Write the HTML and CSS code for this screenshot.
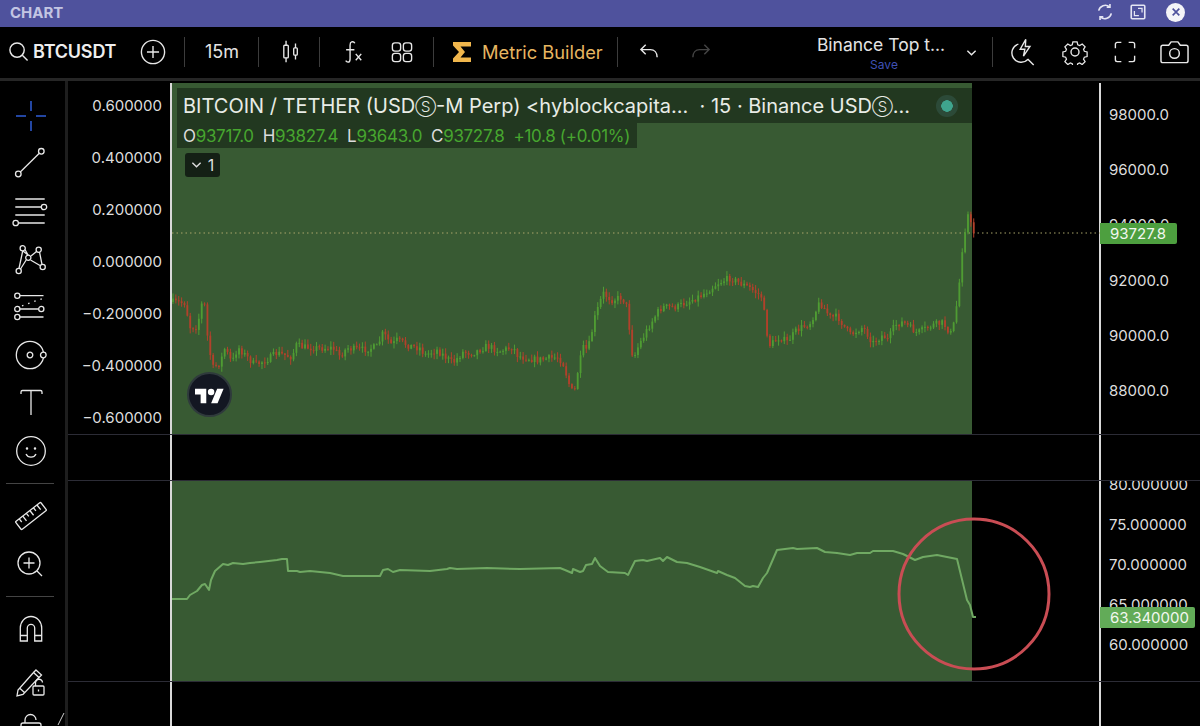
FILE: index.html
```html
<!DOCTYPE html>
<html lang="en">
<head>
<meta charset="utf-8">
<title>Chart</title>
<link rel="stylesheet" href="styles.css">
</head>
<body>
<header class="titlebar">
  <span class="title">CHART</span>
  <div class="win-actions">
    <svg class="win-ic" viewBox="0 0 20 20"><path d="M3 8.500A7.500 7.500 0 0 1 15 4.200M17 11.500A7.500 7.500 0 0 1 5 15.800"/><path d="M15.500 1v3.600h-3.600M4.500 19v-3.600h3.600"/></svg>
    <svg class="win-ic" viewBox="0 0 20 20"><rect x="2.500" y="2.500" width="15" height="15" rx="1"/><path d="M6 9v5h5M10 6h4.500v4.500" class="thin"/></svg>
    <span class="close"><svg viewBox="0 0 12 12"><path d="M2 2l8 8M10 2l-8 8"/></svg></span>
  </div>
</header>

<nav class="toolbar">
  <svg class="ic s22" viewBox="0 0 22 22"><circle cx="9.500" cy="9.500" r="7.500"/><path d="M15 15l5.500 5.500"/></svg>
  <span class="symbol">BTCUSDT</span>
  <svg class="ic s28 add" viewBox="0 0 28 28"><circle cx="14" cy="14" r="12.500"/><path d="M14 7.500v13M7.500 14h13"/></svg>
  <i class="sep s1"></i>
  <span class="interval">15m</span>
  <i class="sep s2"></i>
  <svg class="ic s24 candle" viewBox="0 0 20 26"><rect x="2" y="6" width="5" height="14" rx="1"/><path d="M4.500 1v5M4.500 20v5"/><rect x="13" y="9" width="4" height="8" rx="1"/><path d="M15 4v5M15 17v5"/></svg>
  <i class="sep s3"></i>
  <span class="fx"><svg class="ic s24" viewBox="0 0 24 26"><path d="M14 3.500a3 3 0 0 0-3.500-1.500c-1.500.5-1.700 2-1.700 3.500v15c0 2-.8 3.500-2.300 3.500-1 0-1.800-.5-2.500-1.500M4.500 10.500h9"/><path d="M15 15l6 7M21 15l-6 7" class="thin"/></svg></span>
  <svg class="ic s24 grid-ic" viewBox="0 0 24 24"><rect x="1.500" y="2" width="9" height="9" rx="2.800"/><rect x="13.500" y="2" width="9" height="9" rx="2.800"/><rect x="1.500" y="13.500" width="9" height="9" rx="2.800"/><rect x="13.500" y="13.500" width="9" height="9" rx="2.800"/></svg>
  <i class="sep s4"></i>
  <svg class="sigma" viewBox="0 0 20 22"><path d="M1 1h18v4.500H8.500L13 11l-4.500 5.500H19V21H1v-3.500L7 11 1 4.500z"/></svg>
  <span class="metric">Metric Builder</span>
  <i class="sep s5"></i>
  <svg class="ic s22 undo" viewBox="0 0 22 20"><path d="M7 3L2 8l5 5M2 8h10c4 0 7 3 7 8"/></svg>
  <svg class="ic s22 redo" viewBox="0 0 22 20"><path d="M15 3l5 5-5 5M20 8H10c-4 0-7 3-7 8"/></svg>
  <div class="layout">
    <span class="layout-name">Binance Top t...</span>
    <span class="save">Save</span>
  </div>
  <svg class="ic chev" viewBox="0 0 12 8"><path d="M1.500 1.500L6 6l4.500-4.500"/></svg>
  <i class="sep s6"></i>
  <svg class="ic s28 bolt" viewBox="0 0 28 30"><path d="M9 6.500a10 10 0 1 0 10.500 16.200M19 22.500l6.500 6.500"/><path d="M17 1.500L11 12h5l-1.500 7.500 7-10.500h-5z"/></svg>
  <svg class="ic s28 gear" viewBox="0 0 28 28"><circle cx="14" cy="14" r="4.300"/><path d="M11.500 1.800h5l.8 3.500 2.300 1 3-1.900 3.500 3.500-1.900 3 1 2.300 3.300.8v5.400l-3.300.8-1 2.300 1.900 3-3.500 3.500-3-1.900-2.300 1-.8 3.200h-5l-.8-3.200-2.300-1-3 1.900-3.500-3.500 1.900-3-1-2.300-3.300-.8v-5.400l3.300-.8 1-2.300-1.900-3 3.500-3.500 3 1.900 2.300-1z" transform="translate(1.400 1.400) scale(.9)"/></svg>
  <svg class="ic s24 full" viewBox="0 0 24 24"><path d="M1.500 8V3.500a2 2 0 0 1 2-2H8M16 1.500h4.500a2 2 0 0 1 2 2V8M22.500 16v4.500a2 2 0 0 1-2 2H16M8 22.500H3.500a2 2 0 0 1-2-2V16"/></svg>
  <svg class="ic cam" viewBox="0 0 30 24"><path d="M3 5h6l2.500-3.500h7L21 5h6a2 2 0 0 1 2 2v14a2 2 0 0 1-2 2H3a2 2 0 0 1-2-2V7a2 2 0 0 1 2-2z"/><circle cx="15" cy="13.500" r="5"/></svg>
</nav>

<main class="workspace">
  <aside class="rail">
    <div class="tool"><svg class="blue" viewBox="-18 -19 36 36"><path d="M0-15V-5M0 5V15M-15 0H-5M5 0H15"/></svg></div>
    <div class="tool"><svg viewBox="-18 -18 36 36"><circle cx="-12.700" cy="11" r="2.800"/><circle cx="10.300" cy="-11.700" r="2.800"/><path d="M-10.700 9L8.300-9.700"/></svg></div>
    <div class="tool"><svg viewBox="-18 -18 36 36"><path d="M-15.700-12H13.700M-15.700-4H10.300M-15.700 4H13.700M-12.500 12H13.700"/><circle cx="13" cy="-4" r="2.700"/><circle cx="-15.300" cy="12" r="2.700"/></svg></div>
    <div class="tool"><svg viewBox="-18 -18 36 36"><path d="M-8-8L-3-4M-8.300-8L-12 9.500M-6-9.500L-2.700-3.500M5.500-7.500L0-3M8.500-7L11 5.500M-.5 1L9 6.500M-4.500 0.500L-10.500 10"/><circle cx="-8.300" cy="-10.700" r="2.600"/><circle cx="7.700" cy="-9.300" r="2.600"/><circle cx="-2.700" cy="-1.300" r="2.600"/><circle cx="11.700" cy="8" r="2.600"/><circle cx="-12.300" cy="12" r="2.600"/></svg></div>
    <div class="tool"><svg viewBox="-18 -18 36 36"><circle cx="-13.700" cy="-11.300" r="2.600"/><circle cx="-13.700" cy="2" r="2.600"/><circle cx="10.300" cy="2" r="2.600"/><circle cx="-13.700" cy="10" r="2.600"/><path d="M-11-11.300H12.500M-11 2H7.700M-11 10H12.500"/><path d="M-9-1.200L13-9" class="dots"/></svg></div>
    <div class="tool"><svg viewBox="-18 -18 36 36"><circle cx="-1" r="13.700"/><circle cx="-1" r="2.800"/><circle cx="12.300" r="2.800" class="fillbg"/></svg></div>
    <div class="tool"><svg viewBox="-18 -18 36 36"><path d="M-10-9v-2q0-1.500 1.500-1.500H9.500Q11-12.500 11-11v2M0-12.500V12"/></svg></div>
    <div class="tool"><svg viewBox="-18 -18 36 36"><circle r="14.300"/><circle cx="-4" cy="-2.500" r=".6"/><circle cx="4" cy="-2.500" r=".6"/><path d="M-5 3a5.500 5.500 0 0 0 10 0"/></svg></div>
    <hr class="rule">
    <div class="tool"><svg viewBox="-18 -18 36 36"><g transform="rotate(-38)"><rect x="-16" y="-5" width="32" height="10" rx="1"/><path d="M-11-5v4M-6.500-5v6M-2-5v4M2.500-5v6M7-5v4M11.500-5v6"/></g></svg></div>
    <div class="tool"><svg viewBox="-18 -18 36 36"><circle cx="-2" cy="-1" r="11"/><path d="M6 7L11 12M-2-6.500V4.500M-7.500-1H3.500"/></svg></div>
    <hr class="rule">
    <div class="tool"><svg viewBox="-18 -18 36 36"><path d="M-10.700 12V-1A10.700 11.500 0 0 1 10.700-1V12H3.700V-1A3.700 3.700 0 0 0-3.700-1V12ZM-10.700 6.500H-3.700M3.700 6.500H10.700"/></svg></div>
    <div class="tool pencil"><svg viewBox="-18 -18 36 36"><path d="M-13 8L-14 14 -8 12.500 8-4.500 2.500-9.500ZM-11.500 6L-6 11M5-12L10.500-7 8-4.500 2.500-9.500Z"/><rect x="2" y="4" width="11" height="9" rx="1" class="fillbg"/><path d="M4.500 4V1a3.500 3.500 0 0 1 7-.5M7.500 7.500v2"/></svg></div>
    <div class="tool"><svg viewBox="-18 -18 36 36"><path d="M-6-7V-10a5.500 5.500 0 0 1 11 0"/><rect x="-10" y="-7" width="20" height="17" rx="2"/></svg></div>
    <svg class="corner" viewBox="0 0 8 14"><path d="M7 1L1 13"/></svg>
  </aside>

  <section class="panes">
    <div class="row top">
      <div class="axis left">
        <span>0.600000</span><span>0.400000</span><span>0.200000</span><span>0.000000</span><span>−0.200000</span><span>−0.400000</span><span>−0.600000</span>
      </div>
      <div class="plot"></div>
      <div class="margin"></div>
      <div class="axis right">
        <span>98000.0</span><span>96000.0</span><span>94000.0</span><span>92000.0</span><span>90000.0</span><span>88000.0</span>
      </div>
      <svg id="candles" class="overlay" viewBox="68 83 1132 351"></svg>
      <div class="legend">
        <div class="legend-title">
          <span>BITCOIN / TETHER (USD<span class="sc">Ⓢ</span>-M Perp) &lt;hyblockcapita...&nbsp; · 15 · Binance USD<span class="sc">Ⓢ</span>...</span>
          <i class="status"></i>
        </div>
        <div class="ohlc">
          <span>O<b>93717.0</b></span><span>H<b>93827.4</b></span><span>L<b>93643.0</b></span><span>C<b>93727.8</b></span><span><b>+10.8 (+0.01%)</b></span>
        </div>
        <div class="collapse"><svg viewBox="0 0 12 8"><path d="M1.500 1.500L6 6l4.500-4.500"/></svg>1</div>
      </div>
      <div class="tv-logo"><svg viewBox="0 0 36 28"><path d="M14 25H7V14H0V7h14v18zM28 25h-8l7.500-18h8L28 25z"/><circle cx="20" cy="11" r="4"/></svg></div>
      <span class="tag price">93727.8</span>
    </div>

    <div class="row gap">
      <div></div><div class="plot blank"></div><div></div><div class="axis right"></div>
    </div>

    <div class="row bottom">
      <div></div>
      <div class="plot"></div>
      <div class="margin"></div>
      <div class="axis right osc">
        <span>80.000000</span><span>75.000000</span><span>70.000000</span><span>65.000000</span><span>60.000000</span>
      </div>
      <svg class="overlay" viewBox="68 481 1132 200">
        <polyline class="osc-line" points="172,599 187,599 190,595 197,591 202,585 205,584 209,590 211,580 215,571 223,564 228,565 233,563 243,564 250,563 260,562 277,560 282,559 287,559 288,571 297,571 300,572 310,571 330,573 343,576 380,576 383,570 388,569 393,572 400,570 430,571 447,569 450,568 457,569 487,568 520,569 560,568 565,570 572,573 573,569 580,572 583,571 586,565 592,564 595,558 600,566 608,572 625,573 628,575 635,561 643,560 647,561 660,558 663,561 667,557 677,562 687,563 700,567 717,573 718,571 727,575 735,578 745,586 750,587 753,586 758,587 763,578 767,573 777,550 793,548 797,549 817,548 825,552 837,553 850,555 857,553 870,553 873,551 893,551 903,554 915,560 923,557 937,555 957,559 967,600 970,605 973,617 976,617"/>
        <circle class="mark" cx="974" cy="594" r="75"/>
      </svg>
      <span class="tag value">63.340000</span>
    </div>

    <div class="row foot">
      <div></div><div class="plot blank"></div><div></div><div class="axis right"></div>
    </div>
  </section>
</main>
<script src="chart.js"></script>
</body>
</html>
```

FILE: styles.css
```css
* { box-sizing: border-box; }
html, body { margin: 0; height: 100%; }
body {
  width: 1200px;
  height: 726px;
  overflow: hidden;
  background: #000;
  color: #e6e6e6;
  font-family: Inter, "Liberation Sans", sans-serif;
  display: flex;
  flex-direction: column;
}

.titlebar {
  height: 27px;
  flex: none;
  background: #4f529d;
  display: flex;
  align-items: center;
  justify-content: space-between;
  padding: 0 15px 3px 10px;
}
.title { font-size: 15px; font-weight: 700; color: #c3c5e3; }
.win-actions { display: flex; align-items: center; gap: 15px; }
.win-ic { width: 18px; height: 18px; fill: none; stroke: #e4e5f3; stroke-width: 1.800; }
.win-ic .thin { stroke-width: 1.400; }
.close {
  width: 19px; height: 19px; border-radius: 50%;
  background: #f4f4f8;
  display: flex; align-items: center; justify-content: center;
  margin-left: 4px;
}
.close svg { width: 10px; height: 10px; fill: none; stroke: #4f529d; stroke-width: 2; }

.toolbar {
  height: 54px;
  flex: none;
  display: flex;
  align-items: center;
  border-bottom: 3px solid #262626;
  padding: 0 9px 2px 8px;
  font-size: 18px;
}
.toolbar > * { flex: none; }
.ic { fill: none; stroke: #e8e8e8; stroke-width: 1.500; }
.s22 { width: 21px; height: 21px; }
.s24 { width: 22px; height: 24px; }
.s28 { width: 26px; height: 26px; }
.sep { width: 1px; height: 30px; background: #3c3c3c; }
.symbol { font-weight: 600; margin-left: 4px; color: #eee; letter-spacing: -.2px; width: 82px; }
.add { margin-left: 25px; }
.s1 { margin-left: 18px; }
.interval { margin-left: 20px; width: 35px; color: #e4e4e4; }
.s2 { margin-left: 18px; }
.candle { margin-left: 23px; width: 18px; height: 27px; }
.s3 { margin-left: 19px; }
.fx { margin-left: 22px; display: flex; }
.grid-ic { margin-left: 27px; }
.s4 { margin-left: 20px; }
.sigma { margin-left: 18px; width: 20px; height: 22px; fill: #f0b64c; }
.metric { margin-left: 10px; color: #e7b661; width: 123px; font-size: 18.300px; white-space: nowrap; }
.s5 { margin-left: 12px; }
.undo { margin-left: 21px; }
.redo { margin-left: 30px; stroke: #444; }
.layout {
  margin-left: 106px;
  width: 128px;
  display: flex;
  flex-direction: column;
  align-items: center;
  line-height: 1;
  color: #e4e4e4;
}
.layout-name { font-size: 17.500px; white-space: nowrap; margin-top: 4px; }
.save { font-size: 12px; color: #3f50b5; margin-top: 6px; margin-left: 6px; }
.chev { width: 11px; height: 8px; margin-left: 21px; margin-top: 2px; }
.s6 { margin-left: 15px; }
.bolt { margin-left: 17px; height: 28px; }
.gear { margin-left: 26px; }
.full { margin-left: 26px; }
.cam { margin-left: 24px; width: 29px; height: 24px; }

.workspace { flex: 1; display: flex; min-height: 0; position: relative; }
.rail {
  width: 68px;
  flex: none;
  border-right: 3px solid #1e1e1e;
  padding-top: 10px;
  display: flex;
  flex-direction: column;
  overflow: hidden;
  position: relative;
}
.tool { height: 48px; flex: none; width: 62px; display: flex; align-items: center; justify-content: center; }
.tool svg { width: 36px; height: 36px; fill: none; stroke: #e8e8e8; stroke-width: 1.300; overflow: visible; }
.tool svg.blue { stroke: #2f5ed8; stroke-width: 1.500; }
.tool .dots { stroke-dasharray: 1.500 5; }
.tool .fillbg { fill: #000; }
.pencil { margin-top: 5px; }
.rule { width: 48px; height: 1px; margin: 8px 0 8px 6px; border: 0; background: #444; flex: none; }
.corner { position: absolute; right: 0; bottom: 0; width: 8px; height: 14px; fill: none; stroke: #cfcfcf; stroke-width: 1; }

.panes { flex: 1; min-width: 0; padding-top: 2px; display: flex; flex-direction: column; }
.row {
  display: grid;
  grid-template-columns: 102px 802px 128px 100px;
  border-bottom: 1px solid #2c2c36;
  position: relative;
  flex: none;
}
.top { height: 352px; }
.gap { height: 46px; }
.bottom { height: 201px; }
.foot { border-bottom: 0; flex: 1; }
.plot { background: #385a33; border-left: 2px solid #d9d9d9; }
.plot.blank { background: transparent; }
.axis { font-size: 15px; color: #dedede; display: flex; flex-direction: column; }
.axis.left { align-items: flex-end; padding: 13.500px 8px 0 0; gap: 34.100px; line-height: 18px; }
.axis.right { border-left: 2px solid #d9d9d9; margin-left: -1px; padding: 23px 0 0 8px; gap: 37.200px; line-height: 18px; }
.axis.osc { height: 200px; overflow: hidden; padding-top: 0; gap: 22px; }
.axis.osc span:first-child { margin-top: -5px; }
.overlay { position: absolute; left: 0; top: 0; width: 1132px; height: 100%; overflow: hidden; pointer-events: none; }
.bottom .overlay { height: 200px; }
.osc-line { fill: none; stroke: #70a963; stroke-width: 2; stroke-linejoin: round; }
.mark { fill: none; stroke: #c94d54; stroke-width: 3; }

.legend { position: absolute; left: 109px; top: 5px; width: 795px; }
.legend-title {
  height: 35px;
  background: #223820;
  display: flex;
  align-items: center;
  justify-content: space-between;
  padding: 0 14px 0 6px;
  font-size: 20px;
  color: #e8ece6;
  white-space: nowrap;
}
.sc { font-size: 15px; font-weight: 300; vertical-align: 1px; }
.status {
  width: 22px; height: 22px; border-radius: 50%;
  background: radial-gradient(circle, #3fa48e 0 5.500px, #2c4a38 6px);
  flex: none;
}
.ohlc {
  width: 460px;
  height: 25px;
  background: #223820;
  display: flex;
  align-items: center;
  gap: 9px;
  padding-left: 6px;
  font-size: 17px;
  color: #dcdcdc;
  white-space: nowrap;
  letter-spacing: -.32px;
}
.ohlc b { font-weight: 400; color: #47a62f; }
.collapse {
  margin: 5px 0 0 8px;
  width: 35px;
  height: 24px;
  background: #142015;
  border-radius: 3px;
  display: flex;
  align-items: center;
  justify-content: center;
  gap: 6px;
  font-size: 16px;
  color: #ddd;
}
.collapse svg { width: 11px; height: 8px; fill: none; stroke: #ddd; stroke-width: 1.500; }
.tv-logo {
  position: absolute;
  left: 119px;
  top: 289px;
  width: 45px;
  height: 45px;
  border-radius: 50%;
  background: #131722;
  border: 2px solid #2f3a3c;
  display: flex;
  align-items: center;
  justify-content: center;
}
.tv-logo svg { width: 29px; height: 23px; fill: #fff; }

.tag {
  position: absolute;
  left: 1032px;
  font-size: 15px;
  color: #f2f7f0;
  line-height: 21px;
  height: 21px;
  border-radius: 0 2px 2px 0;
}
.price { top: 140px; width: 77px; background: #4d9f3f; padding-left: 10px; }
.value { top: 126px; width: 95px; background: #62ab58; padding-left: 10px; }
```

FILE: chart.js
```js
// Draws the price candles from the key levels of the series.
(function () {
  var keys = [[172,302],[185,303],[190,327],[197,327],[202,303],[205,306],[208,343],[213,368],[220,363],[225,348],[232,363],[238,347],[245,355],[255,365],[270,358],[277,353],[292,357],[296,345],[303,347],[317,348],[333,348],[340,356],[347,348],[360,350],[377,347],[383,333],[392,345],[397,340],[410,346],[420,348],[425,355],[437,350],[453,363],[463,352],[473,353],[487,346],[500,351],[513,347],[518,356],[537,360],[558,357],[563,363],[570,387],[574,395],[578,370],[583,348],[588,350],[595,317],[603,293],[612,300],[622,297],[627,307],[633,360],[638,347],[648,328],[657,313],[662,307],[677,307],[687,302],[702,295],[718,283],[730,278],[750,288],[762,297],[767,333],[770,345],[780,337],[787,342],[797,330],[810,323],[820,302],[830,317],[838,317],[850,335],[863,327],[873,343],[883,335],[888,340],[895,325],[903,322],[917,333],[933,325],[943,323],[952,335],[957,303],[960,277],[963,240],[968,215],[973,232]];
  var NS = "http://www.w3.org/2000/svg";
  var svg = document.getElementById("candles");
  var seed = 7;
  function rnd() { seed = (seed * 16807) % 2147483647; return seed / 2147483647; }
  function levelAt(x) {
    for (var i = 1; i < keys.length; i++) {
      if (x <= keys[i][0]) {
        var a = keys[i - 1], b = keys[i];
        return a[1] + (b[1] - a[1]) * (x - a[0]) / (b[0] - a[0]);
      }
    }
    return keys[keys.length - 1][1];
  }
  function add(tag, attrs) {
    var el = document.createElementNS(NS, tag);
    for (var k in attrs) el.setAttribute(k, attrs[k]);
    svg.appendChild(el);
  }
  add("line", { x1: 172, x2: 1100, y1: 233, y2: 233, stroke: "#a9a56a", "stroke-width": 1, "stroke-dasharray": "1.500 3" });
  var prev = levelAt(172);
  for (var x = 173; x < 974; x += 2.87) {
    var target = levelAt(x);
    var close = target + (rnd() - 0.5) * 7;
    var color = close < prev ? "#4f9c33" : "#b2412b";
    var hi = Math.min(prev, close), lo = Math.max(prev, close);
    add("line", { x1: x, x2: x, y1: hi - rnd() * 5 - 0.5, y2: lo + rnd() * 5 + 0.5, stroke: color, "stroke-width": 1 });
    add("rect", { x: x - 0.9, y: hi, width: 1.8, height: Math.max(lo - hi, 1), fill: color });
    prev = close;
  }
})();
```
